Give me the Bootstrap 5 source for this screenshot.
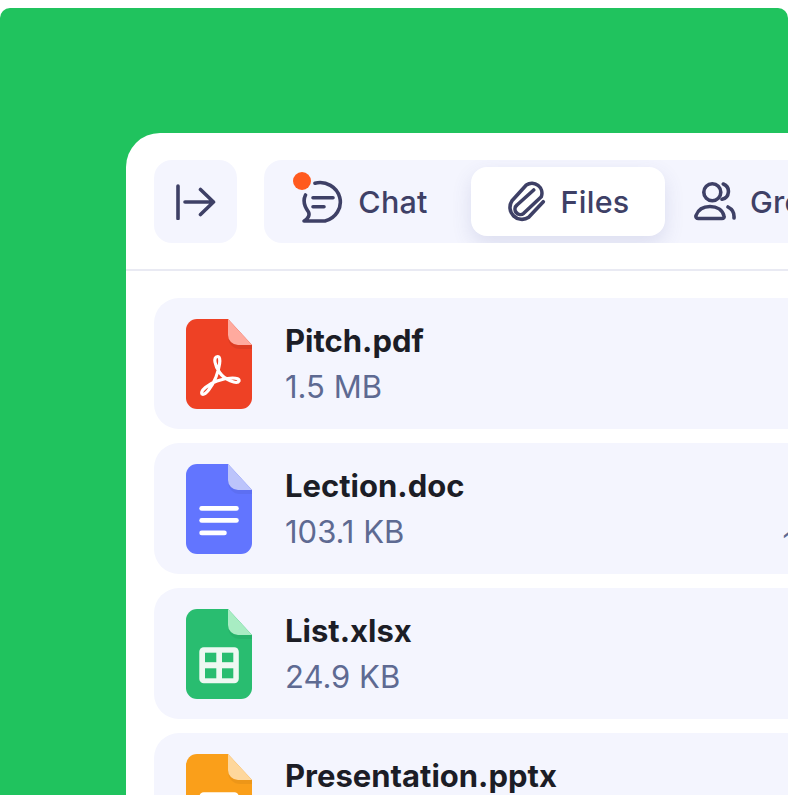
<!DOCTYPE html>
<html lang="en"><head><meta charset="utf-8"><title>Files</title>
<link href="https://cdn.jsdelivr.net/npm/bootstrap@5.3.0/dist/css/bootstrap.min.css" rel="stylesheet">
<style>
html,body{height:804px;overflow:hidden;background:#fff}
body{font-family:Inter,"Liberation Sans",sans-serif}
.stage{height:787px;margin-top:8px;background:#20c35e;border-radius:10px 10px 0 0;overflow:hidden;padding:125px 0 0 126px}
.sheet{width:790px;height:700px;background:#fff;border-radius:34px 0 0 0}
.topbar{padding:27px 27px 26px 28px;gap:27px;border-bottom:2px solid #e9eaf3;height:138px}
.side-btn{width:83px;height:83px;border:0;background:#f4f5fe;border-radius:18px;flex:none}
.tabbar{background:#f4f5fe;border-radius:18px 0 0 18px;padding:7px 0 7px 7px;gap:7px;height:83px;flex:1;overflow:hidden}
.tab-item{position:relative;height:69px;width:193px;flex:none;border-radius:16px;gap:14px;font-size:30.5px;font-weight:500;color:#3e4066;letter-spacing:.25px}
.tab-chat{padding-right:6px;gap:11px}
.tab-item.on{background:#fff;box-shadow:0 8px 20px rgba(70,80,150,.14);width:194px}
.tab-wide{width:auto;padding-left:20px}
.dot{position:absolute;left:22px;top:5px;width:18px;height:18px;border-radius:50%;background:#ff5a1f}
.files{padding:27px 27px 0 28px;gap:14px}
.file-row{height:131px;background:#f4f5fe;border-radius:25px;padding:21px 32px;gap:33px;align-items:flex-start;flex:none}
.file-row svg{flex:none}
.fname{font-size:31px;font-weight:700;color:#1c1d26;line-height:44px;white-space:nowrap}
.fsize{font-size:31px;font-weight:400;color:#5e6a92;line-height:44px;margin-top:2px;white-space:nowrap}
.fwhen{font-size:29px;color:#5e6a92;margin-left:auto;line-height:44px;margin-top:57px;white-space:nowrap}
.ln{fill:none;stroke:#3e4066;stroke-width:3.6;stroke-linecap:round;stroke-linejoin:round}
</style></head><body>
<div class="stage">
<div class="sheet">
  <div class="topbar d-flex">
    <button class="side-btn d-flex align-items-center justify-content-center p-0" aria-label="Collapse">
      <svg width="40" height="36" viewBox="0 0 40 36"><path class="ln" d="M2 2V34.500M9 18H37.500M24.500 5.500 37.500 18 24.500 30.500"/></svg>
    </button>
    <div class="tabbar d-flex">
      <div class="tab-item tab-chat d-flex align-items-center justify-content-center">
        <svg width="46" height="44" viewBox="0 0 46 44"><path class="ln" d="M14 3.200A20 19.200 0 1 1 24 41H3C7 39 9 35 7.500 32 3 26 2 20 4.500 15M12 17.700H32M12 26.700H23"/></svg>
        <span>Chat</span><span class="dot"></span>
      </div>
      <div class="tab-item on d-flex align-items-center justify-content-center">
        <svg width="40" height="44" viewBox="0 0 40 44"><path class="ln" d="M36.300 21.700 21.700 37.300A12 12 0 0 1 5 20.700L19.300 5A10 10 0 0 1 34.300 16.700L16.700 33.300A5 5 0 0 1 10 25L26.700 10"/></svg>
        <span>Files</span>
      </div>
      <div class="tab-item tab-wide d-flex align-items-center">
        <svg width="44" height="42" viewBox="0 0 44 42"><g class="ln"><circle cx="20.300" cy="11.300" r="8.500"/><path d="M31.300 3A8 8 0 0 1 30 18.300M6.500 37.500H30C31.500 37.500 32.500 36.500 32 35 30.500 29 25 25.500 18 25.500S6 29 4 34.500C3.500 36 4.500 37.500 6.500 37.500ZM36 26C40 28 42.500 31 42 37"/></g></svg>
        <span>Groups</span>
      </div>
    </div>
  </div>
  <div class="files d-flex flex-column">
    <div class="file-row d-flex">
      <svg width="66" height="90" viewBox="0 0 66 90"><path fill="#ee4125" d="M11 0H42L66 26V79A11 11 0 0 1 55 90H11A11 11 0 0 1 0 79V11A11 11 0 0 1 11 0Z"/><path fill="#000" fill-opacity=".07" d="M42 4V18A12 12 0 0 0 54 30H66V26L42 0Z"/><path fill="#ffaa9e" d="M42 0 66 26H52A10 10 0 0 1 42 16Z"/><path fill="none" stroke="#fff" stroke-width="3.200" stroke-linejoin="round" d="M31.500 37.500C27 37.500 28.500 47 34 54 38 60 51 66 53 62 54 58 42 58 31 62 22 65 14 72 16 75 19 77 26 68 30 58 33 50 36 37.500 31.500 37.500Z"/></svg>
      <div><div class="fname">Pitch.pdf</div><div class="fsize">1.5 MB</div></div>
    </div>
    <div class="file-row d-flex">
      <svg width="66" height="90" viewBox="0 0 66 90"><path fill="#6275ff" d="M11 0H42L66 26V79A11 11 0 0 1 55 90H11A11 11 0 0 1 0 79V11A11 11 0 0 1 11 0Z"/><path fill="#000" fill-opacity=".05" d="M42 4V18A12 12 0 0 0 54 30H66V26L42 0Z"/><path fill="#bcc4fb" d="M42 0 66 26H52A10 10 0 0 1 42 16Z"/><g fill="#fff"><rect x="13.300" y="42" width="39.500" height="4.800" rx="2.400"/><rect x="13.300" y="54" width="39.500" height="4.800" rx="2.400"/><rect x="13.300" y="66.500" width="27.500" height="4.800" rx="2.400"/></g></svg>
      <div><div class="fname">Lection.doc</div><div class="fsize">103.1 KB</div></div>
      <div class="fwhen">18:42</div>
    </div>
    <div class="file-row d-flex">
      <svg width="66" height="90" viewBox="0 0 66 90"><path fill="#29bd70" d="M11 0H42L66 26V79A11 11 0 0 1 55 90H11A11 11 0 0 1 0 79V11A11 11 0 0 1 11 0Z"/><path fill="#000" fill-opacity=".05" d="M42 4V18A12 12 0 0 0 54 30H66V26L42 0Z"/><path fill="#a8edc3" d="M42 0 66 26H52A10 10 0 0 1 42 16Z"/><rect x="13.300" y="38.300" width="39.500" height="36" rx="4.500" fill="#eef8f2"/><g fill="#29bd70"><rect x="19" y="43.700" width="11.300" height="9.500"/><rect x="36" y="43.700" width="11.300" height="9.500"/><rect x="19" y="59.300" width="11.300" height="10"/><rect x="36" y="59.300" width="11.300" height="10"/></g></svg>
      <div><div class="fname">List.xlsx</div><div class="fsize">24.9 KB</div></div>
    </div>
    <div class="file-row d-flex">
      <svg width="66" height="90" viewBox="0 0 66 90"><path fill="#fa9f1a" d="M11 0H42L66 26V79A11 11 0 0 1 55 90H11A11 11 0 0 1 0 79V11A11 11 0 0 1 11 0Z"/><path fill="#000" fill-opacity=".05" d="M42 4V18A12 12 0 0 0 54 30H66V26L42 0Z"/><path fill="#fed79c" d="M42 0 66 26H52A10 10 0 0 1 42 16Z"/><rect x="13.300" y="38.300" width="39.500" height="36" rx="4.500" fill="#fff"/></svg>
      <div><div class="fname">Presentation.pptx</div></div>
    </div>
  </div>
</div>
</div>
<script src="https://cdn.jsdelivr.net/npm/bootstrap@5.3.0/dist/js/bootstrap.bundle.min.js"></script>
</body></html>
